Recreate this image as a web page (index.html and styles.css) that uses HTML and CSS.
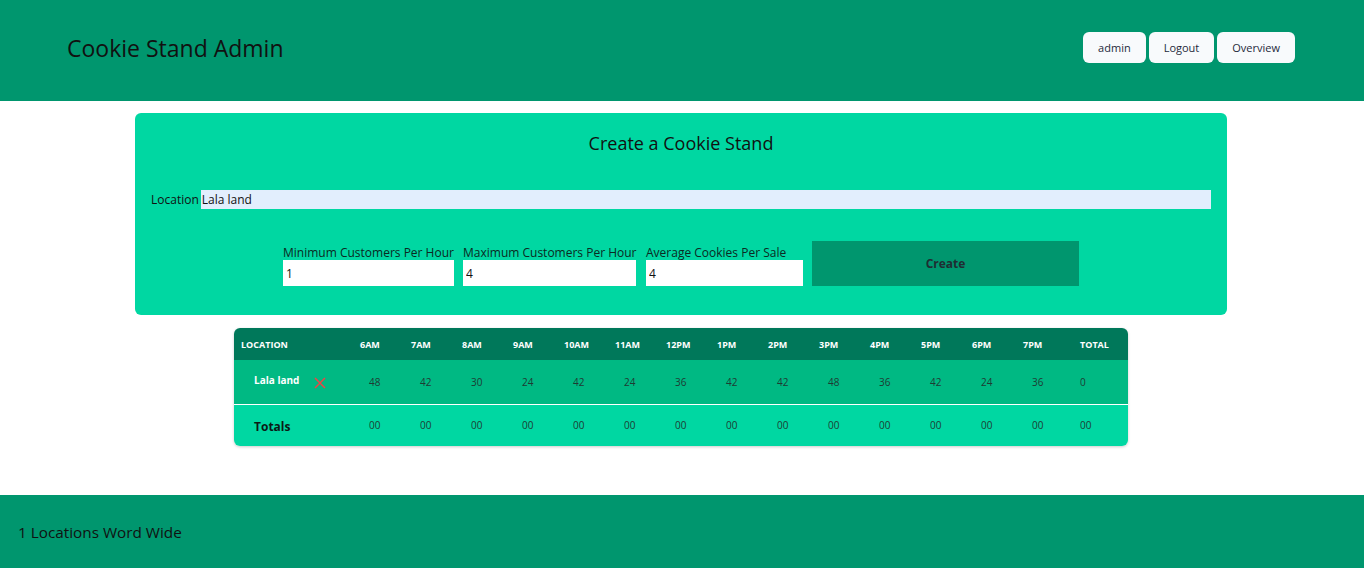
FILE: index.html
```html
<!DOCTYPE html>
<html lang="en">
<head>
<meta charset="utf-8">
<title>Cookie Stand Admin</title>
<link rel="stylesheet" href="styles.css">
</head>
<body>
<div class="page">
  <header class="topbar">
    <h1 class="brand">Cookie Stand Admin</h1>
    <nav class="nav">
      <button class="nav-btn">admin</button>
      <button class="nav-btn">Logout</button>
      <button class="nav-btn">Overview</button>
    </nav>
  </header>

  <main class="main">
    <form class="create-form">
      <h2 class="form-title">Create a Cookie Stand</h2>
      <div class="loc-row">
        <label class="loc-label" for="loc">Location</label>
        <input class="loc-input" id="loc" type="text" value="Lala land">
      </div>
      <div class="fields">
        <div class="field f-min">
          <label>Minimum Customers Per Hour</label>
          <input type="text" value="1">
        </div>
        <div class="field f-max">
          <label>Maximum Customers Per Hour</label>
          <input type="text" value="4">
        </div>
        <div class="field f-avg">
          <label>Average Cookies Per Sale</label>
          <input type="text" value="4">
        </div>
        <button type="button" class="create-btn">Create</button>
      </div>
    </form>

    <div class="table-wrap">
      <table class="sales">
        <colgroup>
          <col class="c-loc">
          <col class="c-hr"><col class="c-hr"><col class="c-hr"><col class="c-hr"><col class="c-hr"><col class="c-hr"><col class="c-hr">
          <col class="c-hr"><col class="c-hr"><col class="c-hr"><col class="c-hr"><col class="c-hr"><col class="c-hr"><col class="c-hr">
          <col class="c-tot">
        </colgroup>
        <thead>
          <tr>
            <th class="th-loc">Location</th>
            <th>6am</th><th>7am</th><th>8am</th><th>9am</th><th>10am</th><th>11am</th><th>12pm</th>
            <th>1pm</th><th>2pm</th><th>3pm</th><th>4pm</th><th>5pm</th><th>6pm</th><th>7pm</th>
            <th class="th-tot">Total</th>
          </tr>
        </thead>
        <tbody>
          <tr class="row-data">
            <td class="td-loc"><span class="loc-name">Lala land</span><svg class="del" width="12" height="12" viewBox="0 0 12 12"><path d="M1 1L11 11M11 1L1 11" stroke="#ef4444" stroke-width="1.5" fill="none"/></svg></td>
            <td>48</td><td>42</td><td>30</td><td>24</td><td>42</td><td>24</td><td>36</td>
            <td>42</td><td>42</td><td>48</td><td>36</td><td>42</td><td>24</td><td>36</td>
            <td class="td-tot">0</td>
          </tr>
        </tbody>
        <tfoot>
          <tr class="row-total">
            <td class="td-loc totals-label">Totals</td>
            <td>00</td><td>00</td><td>00</td><td>00</td><td>00</td><td>00</td><td>00</td>
            <td>00</td><td>00</td><td>00</td><td>00</td><td>00</td><td>00</td><td>00</td>
            <td class="td-tot">00</td>
          </tr>
        </tfoot>
      </table>
    </div>
  </main>

  <footer class="footer">
    <p>1 Locations Word Wide</p>
  </footer>
</div>
</body>
</html>
```

FILE: styles.css
```css
* { box-sizing: border-box; }

html, body {
  margin: 0;
  padding: 0;
}

body {
  font-family: "Open Sans", "Noto Sans", "Liberation Sans", sans-serif;
  color: #111;
  background: #fff;
}

.page {
  min-height: 100vh;
  display: flex;
  flex-direction: column;
}

.topbar {
  height: 101px;
  background: #00966e;
  display: flex;
  align-items: center;
  justify-content: space-between;
  padding: 0 69px 6px 67px;
}

.brand {
  margin: 0;
  font-size: 23px;
  font-weight: 400;
  color: #111;
}

.nav {
  display: flex;
  gap: 3px;
}

.nav-btn {
  height: 31px;
  padding: 0 15px;
  border: none;
  border-radius: 6px;
  background: #f8fafc;
  color: #1e293b;
  font-family: inherit;
  font-size: 11px;
}

.main {
  display: flex;
  flex-direction: column;
  align-items: center;
  padding: 12px 2px 0 0;
}

.create-form {
  width: 1092px;
  background: #00d7a2;
  border-radius: 6px;
  padding: 19px 16px 29px;
}

.form-title {
  margin: 0;
  text-align: center;
  font-size: 18px;
  font-weight: 400;
  line-height: 22px;
}

.loc-row {
  display: flex;
  align-items: center;
  margin-top: 36px;
}

.loc-label {
  font-size: 12px;
  padding-right: 2px;
}

.loc-input {
  flex: 1;
  height: 19px;
  border: none;
  background: #e2eefd;
  font-family: inherit;
  font-size: 12px;
  padding: 0 1px;
  color: #111;
}

.fields {
  display: flex;
  justify-content: center;
  align-items: flex-end;
  gap: 9px;
  margin-top: 32px;
}

.field {
  display: flex;
  flex-direction: column;
}

.field label {
  font-size: 12px;
  line-height: 15px;
  white-space: nowrap;
  color: #0b2a22;
}

.field input {
  height: 26px;
  border: none;
  background: #fff;
  font-family: inherit;
  font-size: 12px;
  padding: 0 3px;
  color: #111;
}

.f-min { width: 171px; }
.f-max { width: 173px; }
.f-avg { width: 157px; margin-left: 1px; }

.create-btn {
  width: 267px;
  height: 45px;
  border: none;
  background: #00966e;
  font-family: inherit;
  font-size: 12px;
  font-weight: 700;
  color: #1f2d33;
}

.table-wrap {
  width: 894px;
  margin-top: 13px;
  border-radius: 6px;
  overflow: hidden;
  box-shadow: 0 1px 3px rgba(0, 0, 0, 0.2);
}

.sales {
  width: 894px;
  border-collapse: collapse;
  table-layout: fixed;
}

.c-loc { width: 119px; }
.c-hr { width: 51px; }
.c-tot { width: 61px; }

.sales thead tr {
  background: #00785a;
  height: 32px;
}

.sales th {
  color: #fff;
  font-size: 9px;
  font-weight: 700;
  text-transform: uppercase;
  text-align: left;
  padding: 0 0 0 7px;
  white-space: nowrap;
}

.sales th.th-tot { padding-left: 13px; }

.sales td {
  font-size: 10px;
  color: #1f3a33;
  padding: 0 0 0 16px;
  white-space: nowrap;
}

.sales td.td-tot { padding-left: 13px; }

.row-data {
  background: #00b983;
  height: 44px;
  border-bottom: 1px solid #fff;
}

.row-total {
  background: #00d7a2;
  height: 42px;
}

.sales td.td-loc {
  padding-left: 20px;
}

.loc-name {
  color: #fff;
  font-weight: 700;
  font-size: 10px;
  position: relative;
  top: -2px;
}

.del {
  margin-left: 15px;
  vertical-align: middle;
}

.sales td.totals-label {
  font-size: 12px;
  font-weight: 700;
  color: #0b1a16;
  padding-top: 2px;
}

.footer {
  margin-top: auto;
  height: 73px;
  background: #00966e;
  display: flex;
  align-items: center;
  padding: 0 18px;
}

.footer p {
  margin: 0;
  font-size: 15.3px;
  color: #111;
}
```
